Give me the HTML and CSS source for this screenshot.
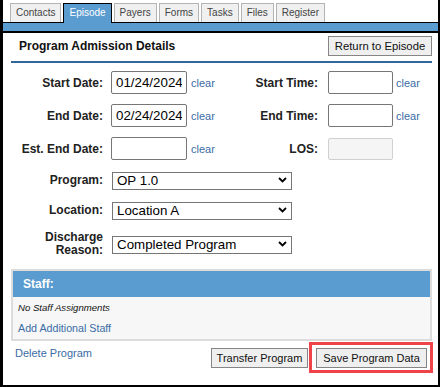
FILE: index.html
```html
<!DOCTYPE html>
<html>
<head>
<meta charset="utf-8">
<link rel="stylesheet" href="styles.css">
</head>
<body>
<div class="frame">
  <div class="tabs">
    <span class="tab">Contacts</span>
    <span class="tab active">Episode</span>
    <span class="tab">Payers</span>
    <span class="tab">Forms</span>
    <span class="tab">Tasks</span>
    <span class="tab">Files</span>
    <span class="tab">Register</span>
  </div>
  <div class="bar"></div>
  <div class="content">
    <div class="header">
      <span class="title">Program Admission Details</span>
      <button class="btn btn-return">Return to Episode</button>
    </div>
    <div class="dates">
      <div class="row">
        <label class="lbl">Start Date:</label>
        <input class="date" type="text" value="01/24/2024">
        <a class="clear">clear</a>
        <label class="lbl2">Start Time:</label>
        <input class="time" type="text" value="">
        <a class="clear clear2">clear</a>
      </div>
      <div class="row">
        <label class="lbl">End Date:</label>
        <input class="date" type="text" value="02/24/2024">
        <a class="clear">clear</a>
        <label class="lbl2">End Time:</label>
        <input class="time" type="text" value="">
        <a class="clear clear2">clear</a>
      </div>
      <div class="row">
        <label class="lbl">Est. End Date:</label>
        <input class="date" type="text" value="">
        <a class="clear">clear</a>
        <label class="lbl2">LOS:</label>
        <input class="time los" type="text" value="" disabled>
      </div>
    </div>
    <div class="selects">
      <div class="srow">
        <label class="lbl slbl">Program:</label>
        <div class="sel">
          <select><option>OP 1.0</option></select>
          <svg class="chev" width="9" height="6" viewBox="0 0 9 6"><path d="M1 1 L4.5 4.5 L8 1" fill="none" stroke="#000" stroke-width="1.8"/></svg>
        </div>
      </div>
      <div class="srow">
        <label class="lbl slbl">Location:</label>
        <div class="sel">
          <select><option>Location A</option></select>
          <svg class="chev" width="9" height="6" viewBox="0 0 9 6"><path d="M1 1 L4.5 4.5 L8 1" fill="none" stroke="#000" stroke-width="1.8"/></svg>
        </div>
      </div>
      <div class="srow">
        <label class="lbl slbl two">Discharge<br>Reason:</label>
        <div class="sel">
          <select><option>Completed Program</option></select>
          <svg class="chev" width="9" height="6" viewBox="0 0 9 6"><path d="M1 1 L4.5 4.5 L8 1" fill="none" stroke="#000" stroke-width="1.8"/></svg>
        </div>
      </div>
    </div>
    <div class="staff">
      <div class="staff-head">Staff:</div>
      <div class="staff-body">
        <div class="none">No Staff Assignments</div>
        <a class="add">Add Additional Staff</a>
      </div>
    </div>
    <div class="actions">
      <a class="delete">Delete Program</a>
      <div class="btns">
        <button class="btn btn-transfer">Transfer Program</button>
        <div class="hl-wrap">
          <button class="btn btn-save">Save Program Data</button>
          <span class="highlight"></span>
        </div>
      </div>
    </div>
  </div>
</div>
</body>
</html>
```
FILE: styles.css
```css
* { box-sizing: border-box; }
html, body { margin: 0; padding: 0; background: #fff; }
body { font-family: "Liberation Sans", Arial, sans-serif; color: #222; }

.frame {
  width: 440px;
  height: 387px;
  border-left: 3px solid #000;
  border-right: 2px solid #000;
  border-bottom: 2px solid #000;
  background: #fff;
}

.tabs {
  display: flex;
  align-items: flex-end;
  height: 22px;
  padding-top: 3px;
  padding-left: 7px;
}
.tab {
  height: 19px;
  line-height: 17px;
  padding: 0 5px;
  margin-right: 2px;
  font-size: 10px;
  color: #444;
  background: #f0f0f0;
  border: 1px solid #b4b4b4;
  border-bottom: none;
}
.tab.active {
  height: 20px;
  margin-bottom: -1px;
  background: #5a9bd0;
  color: #fff;
  border: 1px solid #000;
  border-bottom: none;
  position: relative;
  z-index: 1;
}

.bar {
  height: 11px;
  background: #5a9bd0;
  border-top: 1px solid #000;
  border-bottom: 2px solid #000;
}

.content {
  padding: 0 6px 0 8px;
}

.header {
  display: flex;
  align-items: center;
  justify-content: space-between;
  padding: 3px 0 5px 8px;
  border-bottom: 2px solid #336699;
}
.title {
  font-size: 12px;
  font-weight: bold;
  color: #111;
}

.btn {
  font-family: "Liberation Sans", Arial, sans-serif;
  font-size: 11px;
  color: #111;
  height: 20px;
  padding: 0;
  background: #efefef;
  border: 1px solid #858585;
  border-radius: 0;
}
.btn-return { width: 104px; font-size: 11.3px; }
.btn-transfer { width: 97px; }
.btn-save { width: 111px; }

.dates {
  padding-top: 8px;
  display: flex;
  flex-direction: column;
  gap: 10px;
}
.row {
  display: flex;
  align-items: center;
  height: 23px;
}
.lbl {
  width: 92px;
  text-align: right;
  font-size: 12px;
  font-weight: bold;
  color: #222;
}
.lbl2 {
  width: 97px;
  text-align: right;
  font-size: 12px;
  font-weight: bold;
  color: #222;
}
.date, .time {
  height: 23px;
  border: 1px solid #767676;
  border-radius: 2px;
  font-family: "Liberation Sans", Arial, sans-serif;
  font-size: 13.33px;
  color: #000;
  padding: 0 4px;
  background: #fff;
}
.date { width: 76px; margin-left: 8px; }
.time { width: 65px; margin-left: 10px; }
.los {
  height: 22px;
  background: #f5f5f5;
  border-color: #d0d0d0;
}
.clear {
  width: 30px;
  margin-left: 4px;
  font-size: 11px;
  color: #3a6ca5;
}
.clear2 { margin-left: 3px; }

.selects {
  margin-top: 11px;
  display: flex;
  flex-direction: column;
  gap: 12px;
}
.srow {
  display: flex;
  align-items: center;
}
.slbl { margin-right: 9px; }
.two { line-height: 13px; }
.sel {
  position: relative;
  width: 180px;
  height: 18px;
}
.sel select {
  -webkit-appearance: none;
  appearance: none;
  width: 180px;
  height: 18px;
  border: 1px solid #767676;
  border-radius: 0;
  background: #fff;
  font-family: "Liberation Sans", Arial, sans-serif;
  font-size: 13.33px;
  color: #000;
  padding: 0 4px;
  margin: 0;
}
.chev {
  position: absolute;
  right: 5px;
  top: 6px;
}

.staff {
  margin-top: 12px;
  border: 2px solid #dcdcdc;
}
.staff-head {
  height: 26px;
  line-height: 26px;
  background: #5a9bd0;
  color: #fff;
  font-size: 12px;
  font-weight: bold;
  padding-left: 10px;
}
.staff-body {
  background: #f7f7f7;
  padding: 1px 5px 1px 5px;
}
.none {
  height: 20px;
  line-height: 20px;
  font-size: 9.6px;
  font-style: italic;
  color: #111;
}
.add {
  display: block;
  height: 20px;
  line-height: 20px;
  font-size: 10.7px;
  color: #3a6ca5;
}

.actions {
  display: flex;
  justify-content: space-between;
  align-items: flex-start;
  margin-top: 7px;
  padding: 0 5px 0 4px;
}
.delete {
  font-size: 11px;
  line-height: 11px;
  color: #3a6ca5;
}
.btns {
  display: flex;
  gap: 8px;
}
.hl-wrap {
  position: relative;
}
.highlight {
  position: absolute;
  left: -7px;
  right: -6px;
  top: -6px;
  bottom: -5px;
  border: 3px solid #ef434a;
  pointer-events: none;
}
```
